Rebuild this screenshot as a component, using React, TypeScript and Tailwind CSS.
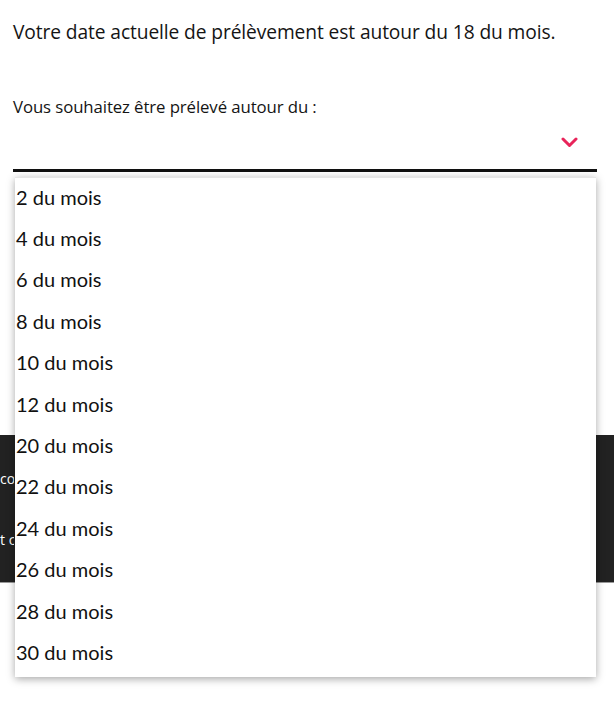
import React from "react";

const days = [2, 4, 6, 8, 10, 12, 20, 22, 24, 26, 28, 30];

export default function App() {
  return (
    <div className="relative w-[614px] h-[701px] overflow-hidden bg-white text-[#141414]" style={{ fontFamily: "'Open Sans', Lato, sans-serif" }}>
      <div className="pl-[13px] pr-[17px]">
        <p className="pt-[18px] text-[19.2px] leading-[28px] tracking-[-0.1px]">Votre date actuelle de prélèvement est autour du 18 du mois.</p>
        <p className="mt-[49px] text-[16.8px] leading-[24px] tracking-[-0.1px]">Vous souhaitez être prélevé autour du :</p>
        <div className="h-[53px] border-b-[3px] border-[#111] flex items-center justify-end pr-[19px]">
          <svg width="17" height="11" viewBox="0 0 17 11" className="mt-[-4px]">
            <path d="M2 2 L8.5 8.5 L15 2" fill="none" stroke="#e8245a" strokeWidth="3" strokeLinecap="round" strokeLinejoin="round" />
          </svg>
        </div>
      </div>
      <div className="mt-[263px] h-[148px] bg-[#222222] border-b border-[#999] text-white text-[14px] flex flex-col justify-between pt-[33px] pb-[32px]">
        <p className="w-[14px] overflow-hidden whitespace-nowrap">co</p>
        <p className="w-[14px] overflow-hidden whitespace-nowrap">t c</p>
      </div>
      <ul className="absolute left-[15px] top-[177px] w-[581px] bg-white shadow-[0_2px_8px_rgba(0,0,0,0.35)] border-t border-[#e6e6e6] pb-[2px]">
        {days.map((d) => (
          <li key={d} className="h-[41.4px] flex items-center pl-[1px] pb-[4px] text-[20px] text-[#111]" style={{ fontFamily: "Lato, sans-serif" }}>
            {d} du mois
          </li>
        ))}
      </ul>
    </div>
  );
}
